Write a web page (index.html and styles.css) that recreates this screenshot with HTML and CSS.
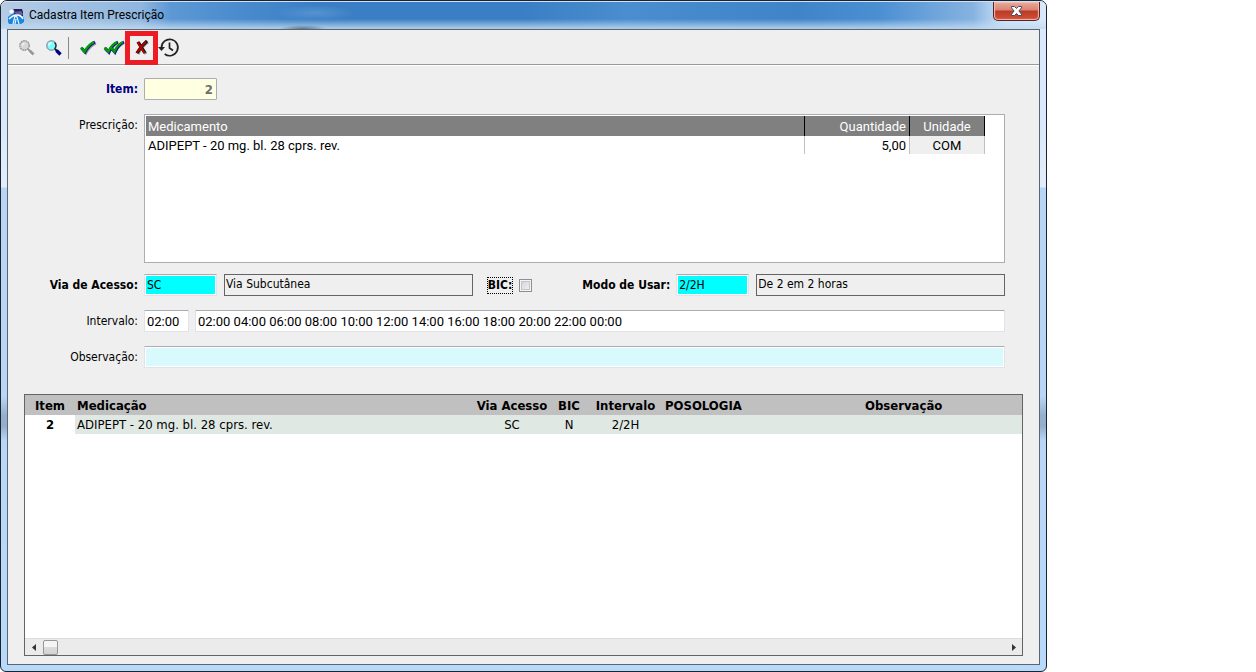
FILE: index.html
```html
<!DOCTYPE html>
<html lang="pt-BR">
<head>
<meta charset="utf-8">
<title>Cadastra Item Prescrição</title>
<link rel="stylesheet" href="styles.css">
</head>
<body>
<main class="window">
  <header class="titlebar">
    <svg class="app-icon" viewBox="0 0 16 16" aria-hidden="true">
      <path d="M3 1h11l1 3v4H6L2 5z" fill="#26215c"/>
      <path d="M6 4l7-1 2 3-2 2-5-2z" fill="#6a5aa0"/>
      <circle cx="3.5" cy="3.5" r="2.5" fill="#fff" stroke="#9cc4e8" stroke-width=".7"/>
      <path d="M0 9q4-4 8-3 5 0 8 4v4l-3 2H1l-1-2z" fill="#1687df"/>
      <path d="M1 11q4-4 8-4 4 0 6 4" fill="none" stroke="#fff" stroke-width="1.6"/>
      <path d="M5 16l2-8 2 1 2 7M8 11l-1 5" fill="none" stroke="#eaf6ff" stroke-width="1.2"/>
    </svg>
    <h1 class="title">Cadastra Item Prescrição</h1>
    <button class="close" type="button" aria-label="Fechar">
      <svg width="13" height="12" viewBox="0 0 13 12"><path d="M1.500 1.500h3l2 2 2-2h3v1.300L8.900 6l2.600 3.200v1.300h-3l-2-2-2 2h-3V9.200L4.100 6 1.500 2.800z" fill="#fff" stroke="#454b60" stroke-width="1"/></svg>
    </button>
  </header>

  <section class="client">
    <div class="toolbar" role="toolbar" aria-label="Ações">
      <button class="tool" type="button" aria-label="Pesquisar" disabled>
        <svg width="18" height="18" viewBox="0 0 18 18"><path d="M10 10l5 6" stroke="#fff" stroke-width="4"/><circle cx="6.500" cy="6.500" r="4.700" fill="#d8d8d8" stroke="#999" stroke-width="1.400" stroke-dasharray="2 .5"/><path d="M4.500 6.500q0-2 2-2" stroke="#fff" fill="none"/><path d="M10 10l2 2" stroke="#999" stroke-width="2"/><path d="M11.500 11.500l4 4" stroke="#999" stroke-width="3"/></svg>
      </button>
      <button class="tool" type="button" aria-label="Localizar">
        <svg width="18" height="18" viewBox="0 0 18 18"><circle cx="6.500" cy="6.500" r="4.700" fill="#7ff" stroke="#8aa4ae" stroke-width="1.500"/><path d="M9.500 3.500q3 3 0 6.300" stroke="#222" fill="none" stroke-width="1.200"/><path d="M4 6.500q0-2.500 2.500-2.500" stroke="#fff" stroke-width="1.600" fill="none"/><path d="M10 10l2 2" stroke="#111" stroke-width="1.800"/><path d="M11.500 11.500l4 4" stroke="#000090" stroke-width="3.400"/></svg>
      </button>
      <span class="divider"></span>
      <button class="tool tool-wide" type="button" aria-label="Confirmar">
        <svg width="18" height="18" viewBox="0 0 18 18"><path d="M2.500 10L6 13.500Q10 6 16 3.500" transform="translate(1 1)" fill="none" stroke="#9a9a9a" stroke-width="2"/><path d="M2.500 9L6 13Q10 6 16 3" fill="none" stroke="#1111a0" stroke-width="3"/><path d="M2 8.500L5.500 12.500Q9 6 15 3" fill="none" stroke="#00a000" stroke-width="2.500"/></svg>
      </button>
      <button class="tool tool-wide" type="button" aria-label="Confirmar todos">
        <svg width="22" height="18" viewBox="0 0 22 18"><g fill="none"><path d="M2 10l4 4Q9 7 15 4M9 10l3 4Q15 7 21 4" stroke="#999" stroke-width="2.500"/><path d="M2 9l4 4Q9 6 15 3M8 9l4 4Q15 6 21 3" stroke="#1111a0" stroke-width="3"/><path d="M1.500 8.500l4 4Q8 6 14 3M7.500 8.500l4 4Q14 6 20 3" stroke="#00a000" stroke-width="2.300"/></g></svg>
      </button>
      <button class="tool tool-marked" type="button" aria-label="Excluir">
        <svg width="16" height="18" viewBox="0 0 16 18"><g fill="none"><path d="M5 4l7 11M14 3Q8 7 4 15" stroke="#999" stroke-width="3"/><path d="M4 3l7 11M13 2Q7 7 3 14" stroke="#111" stroke-width="3.200"/><path d="M3.500 3l7 11M12 2.500Q7 7 2.500 14" stroke="#b00000" stroke-width="2.200"/></g></svg>
      </button>
      <button class="tool" type="button" aria-label="Histórico">
        <svg width="22" height="22" viewBox="0 0 22 22"><path d="M3.500 10.500a8.200 8.200 0 1 1 3.200 6.500M11.500 5.500v5.500l3.500 2.500" fill="none" stroke="#222" stroke-width="1.700"/><path d="M0 10h7l-3.500 4z" fill="#222"/></svg>
      </button>
    </div>

    <form class="form">
      <div class="row">
        <label class="label label-key" for="item">Item:</label>
        <input class="field short item" id="item" value="2" readonly>
      </div>
      <div class="row row-top">
        <span class="label" id="presc">Prescrição:</span>
        <div class="drugs">
          <table class="drug-table" aria-labelledby="presc">
            <colgroup><col><col class="c-qty"><col class="c-unit"></colgroup>
            <thead><tr><th>Medicamento</th><th class="right">Quantidade</th><th class="center">Unidade</th></tr></thead>
            <tbody><tr><td>ADIPEPT - 20 mg. bl. 28 cprs. rev.</td><td class="right">5,00</td><td class="center unit">COM</td></tr></tbody>
          </table>
        </div>
      </div>
      <div class="row row-near">
        <label class="label label-bold" for="via">Via de Acesso:</label>
        <input class="field short cyan" id="via" value="SC">
        <input class="field flat" value="Via Subcutânea" aria-label="Descrição da via" readonly>
        <div class="bic"><label class="bic-label" for="bic">BIC:</label><input class="check" type="checkbox" id="bic"></div>
        <label class="label-bold mode-label" for="modo">Modo de Usar:</label>
        <input class="field short cyan" id="modo" value="2/2H">
        <input class="field flat" value="De 2 em 2 horas" aria-label="Descrição do modo" readonly>
      </div>
      <div class="row">
        <label class="label" for="intervalo">Intervalo:</label>
        <input class="field time" id="intervalo" value="02:00">
        <input class="field grow hours" value="02:00 04:00 06:00 08:00 10:00 12:00 14:00 16:00 18:00 20:00 22:00 00:00" aria-label="Horários">
      </div>
      <div class="row">
        <label class="label" for="obs">Observação:</label>
        <input class="field grow obs" id="obs">
      </div>
    </form>

    <section class="list">
      <table class="list-table">
        <colgroup><col class="l-item"><col><col class="l-via"><col class="l-bic"><col class="l-int"><col class="l-pos"><col class="l-obs"></colgroup>
        <thead><tr><th class="center">Item</th><th>Medicação</th><th class="center">Via Acesso</th><th class="center">BIC</th><th class="center">Intervalo</th><th>POSOLOGIA</th><th>Observação</th></tr></thead>
        <tbody><tr><td class="center number">2</td><td>ADIPEPT - 20 mg. bl. 28 cprs. rev.</td><td class="center">SC</td><td class="center">N</td><td class="center">2/2H</td><td></td><td></td></tr></tbody>
      </table>
      <div class="scroll">
        <button class="arrow" type="button" aria-label="Rolar à esquerda"><svg width="4" height="7" viewBox="0 0 4 7"><path d="M4 0v7L0 3.500z" fill="#333"/></svg></button>
        <span class="thumb"></span>
        <button class="arrow arrow-end" type="button" aria-label="Rolar à direita"><svg width="4" height="7" viewBox="0 0 4 7"><path d="M0 0v7l4-3.500z" fill="#333"/></svg></button>
      </div>
    </section>
  </section>
</main>
</body>
</html>
```
FILE: styles.css
```css
* { box-sizing: border-box; }

body {
  margin: 0;
  padding-right: 209px;
  background: #fff;
  color: #000;
  font: 12px/16px "DejaVu Sans Condensed", Tahoma, sans-serif;
}

input, button { font: inherit; color: inherit; }
button { padding: 0; border: 0; background: none; }

.window {
  display: flex;
  flex-direction: column;
  min-height: 100vh;
  padding: 0 6px 6px;
  border: 1px solid #1b2230;
  border-radius: 7px 7px 6px 6px;
  background:
    linear-gradient(#94afcc00 395px, #94afcc 415px, #94afcc 425px, #94afcc00 440px),
    linear-gradient(#d9e9fb 120px, #e2edfa 186px, #b7d5f5 187px, #b9d9fa);
}

.titlebar {
  display: flex;
  align-items: flex-start;
  height: 28px;
  margin: 0 -6px;
  padding: 0 6px 0 7px;
  border-radius: 6px 6px 0 0;
  border-top: 1px solid #cfe2f6;
  background:
    radial-gradient(24px 4px at 302px 27px, #5c7488, #5c748800),
    radial-gradient(40px 8px at 314px 11px, #6fa3d888, #6fa3d800),
    linear-gradient(#fff0 17px, #c2daefcc 26px),
    linear-gradient(90deg, #b5cce4, #a4c3e3 60px, #8fb6df 140px, #5c98d4 170px, #4a8bce 240px, #3a7fc5 310px, #3a7fc5 50%, #4a8dd0 60%, #3f84c9 76%, #4b8fd3 84%, #86b3e0 93%, #cfe4fb 96%, #d9e9fb);
}

.app-icon { width: 16px; height: 16px; margin-top: 6px; }

.title {
  flex: 1;
  margin: 5px 0 0 5px;
  font: 12px/16px Roboto, "Segoe UI", sans-serif;
}

.close {
  display: grid;
  place-items: center;
  width: 47px;
  height: 19px;
  border: 1px solid #5b2020;
  border-top: 0;
  border-radius: 0 0 5px 5px;
  background: linear-gradient(#e9aa9d, #d98474 8px, #bd3a25 9px, #d2513a);
  box-shadow: inset 0 0 1px 1px #f3bcb0;
}

.client {
  flex: 1;
  display: flex;
  flex-direction: column;
  border: 1px solid #59666f;
  background: #efefef;
}

.toolbar {
  display: flex;
  align-items: center;
  height: 36px;
  padding-left: 5px;
  border-bottom: 1px solid #fff;
  box-shadow: inset 0 -1px #999;
}

.tool {
  display: grid;
  place-items: center;
  width: 27px;
  height: 32px;
}

.divider { width: 1px; height: 22px; margin: 0 6px 0 1px; background: #888; }
.tool-wide { width: 26px; }

.tool-marked {
  width: 33px;
  height: 34px;
  margin-left: -2px;
  border: 5px solid #ed1c24;
}

.tool-marked + .tool { width: 22px; }

.form { padding: 12px 34px 0 0; }

.row { display: flex; align-items: center; margin-bottom: 14px; }
.row-top { align-items: flex-start; margin-bottom: 11px; }
.row-top .label { padding-top: 3px; }

.label { flex: none; width: 130px; margin-right: 6px; text-align: right; }
.label-bold, .label-key { font-weight: bold; }
.label-key { color: #000080; }

.field {
  min-width: 0;
  height: 22px;
  padding: 0 2px;
  border: 1px solid #e2e3ea;
  border-top-color: #abadb3;
  border-radius: 1px;
  background: #fff;
}

.short { flex: none; width: 73px; }
.time { width: 45px; margin-right: 6px; }
.time, .hours, .drug-table { font-family: Roboto, Tahoma, sans-serif; font-size: 13px; }
.grow { flex: 1; }

.item {
  padding-right: 3px;
  border-color: #abadb3;
  background: #ffffe1;
  color: #6d6d6d;
  font-size: 13px;
  font-weight: bold;
  text-align: right;
}

.cyan { background: #0ff; box-shadow: inset 0 0 0 1px #fff; }
.obs { background: #d9fafd; box-shadow: inset 0 0 0 1px #fff; }

.flat {
  flex: 1;
  margin-left: 7px;
  padding: 0 1px 3px;
  border: 1px solid #646464;
  border-radius: 0;
  background: #efefef;
}

.bic { display: flex; align-items: center; gap: 6px; margin-left: 14px; }
.bic-label { border: 1px dotted #000; font-weight: bold; line-height: 15px; }

.check {
  appearance: none;
  width: 13px;
  height: 13px;
  margin: 0;
  border: 1px solid #8e8f8f;
  background: linear-gradient(135deg, #cbcfd5, #f6f6f6);
  box-shadow: inset 0 0 0 1px #f4f4f4, inset 0 0 0 2px #c3c7cc;
}

.mode-label { margin: 0 6px 0 50px; white-space: nowrap; }

table { width: 100%; border-collapse: collapse; table-layout: fixed; }
th, td { padding: 0 2px; text-align: left; white-space: nowrap; overflow: hidden; }
th { padding-top: 2px; }
.right { padding-right: 3px; text-align: right; }
.center { text-align: center; }

.drugs {
  flex: 1;
  height: 149px;
  padding: 1px 19px 1px 1px;
  border: 1px solid #abadb3;
  background: #fff;
}

.c-qty { width: 105px; }
.c-unit { width: 75px; }
.drug-table th { height: 20px; border-right: 1px solid #000; background: #808080; color: #fff; font-weight: normal; }
.drug-table td { height: 18px; padding-top: 1px; border-right: 1px solid #c0c0c0; }
.drug-table .unit { background: #efefef; }

.list {
  flex: 1;
  display: flex;
  flex-direction: column;
  margin: 12px 16px 8px;
  border: 1px solid #646464;
  background: #fff;
}

.list-table { font-size: 13px; }
.list-table th { height: 20px; background: #c0c0c0; }
.list-table td { height: 19px; padding-top: 1px; background: #e0e8e3; }
.list-table .number { background: #fff; font-weight: bold; }
.l-item { width: 50px; }
.l-via { width: 76px; }
.l-bic { width: 38px; }
.l-int { width: 75px; }
.l-pos { width: 200px; }
.l-obs { width: 159px; }

.scroll {
  display: flex;
  align-items: center;
  height: 17px;
  margin-top: auto;
  background: #ebebeb;
  border-top: 1px solid #ddd;
}

.arrow { display: grid; place-items: center; width: 17px; height: 16px; }
.arrow-end { margin-left: auto; }

.thumb {
  width: 15px;
  height: 15px;
  margin-left: 1px;
  border: 1px solid #979797;
  border-radius: 2px;
  background: linear-gradient(#f5f5f5 50%, #dcdcdc 50%, #d2d2d2);
}
```
